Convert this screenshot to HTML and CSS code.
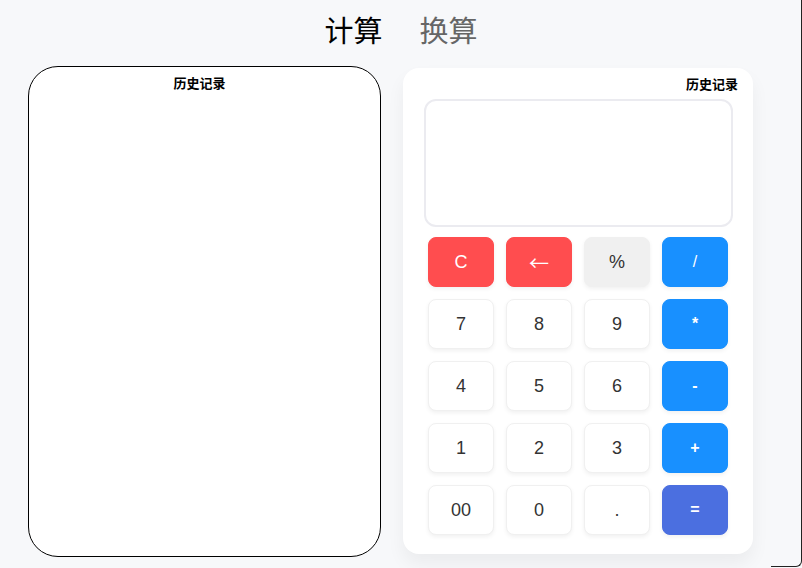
FILE: index.html
```html
<!DOCTYPE html>
<html lang="zh-CN">
<head>
<meta charset="utf-8">
<title>计算器</title>
<link rel="stylesheet" href="styles.css">
</head>
<body>
<div class="page">
  <div class="tabs">
    <span class="tab active">计算</span>
    <span class="tab">换算</span>
  </div>
  <div class="main">
    <section class="history">
      <div class="history-title">历史记录</div>
    </section>
    <section class="calc">
      <div class="calc-head">历史记录</div>
      <div class="display"></div>
      <div class="keys">
        <button class="key red">C</button>
        <button class="key red arrow">←</button>
        <button class="key grey">%</button>
        <button class="key blue slash">/</button>
        <button class="key">7</button>
        <button class="key">8</button>
        <button class="key">9</button>
        <button class="key blue">*</button>
        <button class="key">4</button>
        <button class="key">5</button>
        <button class="key">6</button>
        <button class="key blue">-</button>
        <button class="key">1</button>
        <button class="key">2</button>
        <button class="key">3</button>
        <button class="key blue">+</button>
        <button class="key">00</button>
        <button class="key">0</button>
        <button class="key">.</button>
        <button class="key indigo">=</button>
      </div>
    </section>
  </div>
  <div class="frame-edge"></div>
</div>
</body>
</html>
```
FILE: styles.css
```css
* { box-sizing: border-box; }
html, body {
  margin: 0;
  padding: 0;
  background: #f7f8fa;
  font-family: "Liberation Sans", "Noto Sans CJK SC", Arial, sans-serif;
  overflow: hidden;
}
.page {
  position: relative;
  width: 802px;
  height: 568px;
}
.tabs {
  height: 60px;
  display: flex;
  justify-content: center;
  align-items: center;
  gap: 37px;
  padding-bottom: 2px;
}
.tab {
  font-family: "Noto Sans CJK SC", sans-serif;
  font-size: 29px;
  line-height: 40px;
  color: #666;
}
.tab.active { color: #000; }
.main {
  display: flex;
  align-items: flex-start;
  padding-top: 6px;
  padding-left: 28px;
  gap: 22px;
}
.history {
  width: 353px;
  height: 491px;
  background: #fff;
  border: 1px solid #000;
  border-radius: 30px;
  padding-top: 8px;
  padding-right: 10px;
}
.history-title {
  text-align: center;
  font-family: "Noto Sans CJK SC", sans-serif;
  font-weight: bold;
  font-size: 13px;
  line-height: 16px;
  color: #000;
}
.calc {
  margin-top: 2px;
  width: 350px;
  height: 486px;
  background: #fff;
  border-radius: 16px;
  box-shadow: 0 10px 18px rgba(0, 0, 0, 0.05);
  padding: 7px 15px 0 21px;
}
.calc-head {
  text-align: right;
  font-family: "Noto Sans CJK SC", sans-serif;
  font-weight: bold;
  font-size: 13px;
  line-height: 18px;
  color: #000;
}
.display {
  margin-top: 6px;
  width: 309px;
  height: 128px;
  border: 2px solid #ebebf0;
  border-radius: 12px;
  background: #fff;
}
.keys {
  margin-top: 10px;
  margin-left: 4px;
  display: grid;
  grid-template-columns: repeat(4, 66px);
  grid-auto-rows: 50px;
  gap: 12px;
}
.key {
  border: 1px solid #f0f0f0;
  border-radius: 8px;
  background: #fff;
  box-shadow: 0 2px 4px rgba(0, 0, 0, 0.06);
  font-family: "Liberation Sans", Arial, sans-serif;
  font-size: 18px;
  color: #333;
  padding: 0;
  display: flex;
  align-items: center;
  justify-content: center;
}
.key.red {
  background: #ff4d4f;
  border-color: #ff4d4f;
  color: #fff;
}
.key.arrow {
  font-family: "Noto Sans CJK SC", sans-serif;
  font-size: 20px;
}
.key.grey {
  background: #f0f0f0;
  border-color: #f0f0f0;
  color: #333;
}
.key.blue {
  background: #1890ff;
  border-color: #1890ff;
  color: #fff;
  font-weight: bold;
  font-size: 16px;
}
.key.slash { font-weight: normal; }
.key.indigo {
  background: #4b6fe0;
  border-color: #4b6fe0;
  color: #fff;
  font-weight: bold;
  font-size: 16px;
}
.frame-edge {
  position: absolute;
  left: 771px;
  top: -4px;
  width: 31px;
  height: 571px;
  border-right: 1px solid #222;
  border-bottom: 1px solid #222;
  border-bottom-right-radius: 6px;
  pointer-events: none;
}
```
